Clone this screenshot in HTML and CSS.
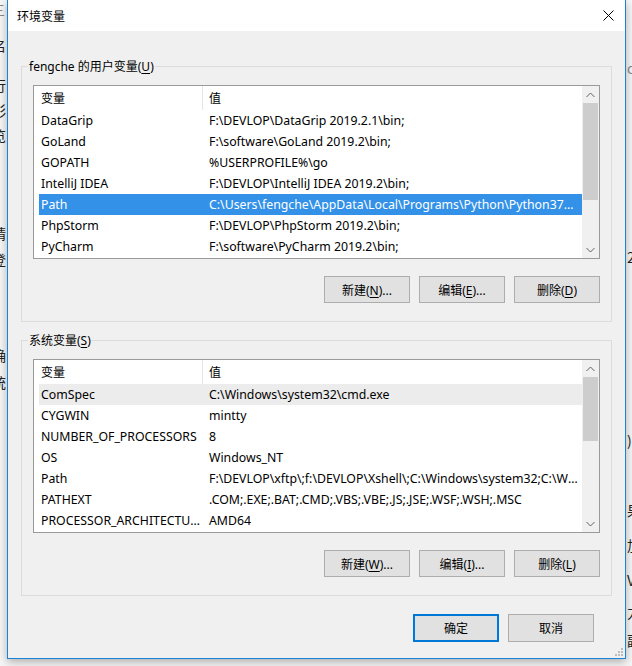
FILE: index.html
```html
<!DOCTYPE html>
<html lang="zh-CN">
 <head>
  <meta charset="utf-8">
  <title>环境变量</title>
  <link rel="stylesheet" href="styles.css">
 </head>
 <body>
  <div id="desktop">
   <!-- bits of the window behind the dialog -->
   <span class="frag grey l1">三</span>
   <span class="frag l2">名</span>
   <span class="frag l3">行</span>
   <span class="frag l4">彩</span>
   <span class="frag l5">览</span>
   <span class="frag l6">晴</span>
   <span class="frag l7">登</span>
   <span class="frag l8">确</span>
   <span class="frag l9">统</span>
   <span class="frag grey r1">d</span>
   <span class="frag r2">29</span>
   <span class="frag r3">)</span>
   <span class="frag r4">果</span>
   <span class="frag r5">加</span>
   <span class="frag r6">V</span>
   <span class="frag r7">力</span>
   <span class="frag r8">副</span>

   <div class="dialog">
    <div class="titlebar">
     <span class="title">环境变量</span>
     <svg class="close" width="11" height="11" viewBox="0 0 11 11">
      <path d="M0.5 0.5L10.5 10.5M10.5 0.5L0.5 10.5" stroke="#000" stroke-width="1" fill="none"/>
     </svg>
    </div>

    <div class="dialog-body">
     <fieldset class="group">
      <legend>fengche 的用户变量(<u>U</u>)</legend>
      <div class="list">
       <div class="list-rows">
        <div class="list-head">
         <div class="head-name">变量</div>
         <div class="head-value">值</div>
        </div>
        <div class="row"><div class="cell-name">DataGrip</div><div class="cell-value">F:\DEVLOP\DataGrip 2019.2.1\bin;</div></div>
        <div class="row"><div class="cell-name">GoLand</div><div class="cell-value">F:\software\GoLand 2019.2\bin;</div></div>
        <div class="row"><div class="cell-name">GOPATH</div><div class="cell-value">%USERPROFILE%\go</div></div>
        <div class="row"><div class="cell-name">IntelliJ IDEA</div><div class="cell-value">F:\DEVLOP\IntelliJ IDEA 2019.2\bin;</div></div>
        <div class="row selected"><div class="cell-name">Path</div><div class="cell-value">C:\Users\fengche\AppData\Local\Programs\Python\Python37\Scripts\;C:\Users\fengche\AppData\Local\Programs\Python\Python37\</div></div>
        <div class="row"><div class="cell-name">PhpStorm</div><div class="cell-value">F:\DEVLOP\PhpStorm 2019.2\bin;</div></div>
        <div class="row"><div class="cell-name">PyCharm</div><div class="cell-value">F:\software\PyCharm 2019.2\bin;</div></div>
       </div>
       <div class="scrollbar">
        <div class="sb-btn">
         <svg width="9" height="6" viewBox="0 0 9 6"><path d="M0.5 5L4.5 1L8.5 5" stroke="#606060" fill="none"/></svg>
        </div>
        <div class="sb-thumb user-thumb"></div>
        <div class="sb-track"></div>
        <div class="sb-btn">
         <svg width="9" height="6" viewBox="0 0 9 6"><path d="M0.5 1L4.5 5L8.5 1" stroke="#606060" fill="none"/></svg>
        </div>
       </div>
      </div>
      <div class="actions">
       <button class="btn">新建(<u>N</u>)...</button>
       <button class="btn">编辑(<u>E</u>)...</button>
       <button class="btn">删除(<u>D</u>)</button>
      </div>
     </fieldset>

     <fieldset class="group system">
      <legend>系统变量(<u>S</u>)</legend>
      <div class="list">
       <div class="list-rows">
        <div class="list-head">
         <div class="head-name">变量</div>
         <div class="head-value">值</div>
        </div>
        <div class="row hot"><div class="cell-name">ComSpec</div><div class="cell-value">C:\Windows\system32\cmd.exe</div></div>
        <div class="row"><div class="cell-name">CYGWIN</div><div class="cell-value">mintty</div></div>
        <div class="row"><div class="cell-name">NUMBER_OF_PROCESSORS</div><div class="cell-value">8</div></div>
        <div class="row"><div class="cell-name">OS</div><div class="cell-value">Windows_NT</div></div>
        <div class="row"><div class="cell-name">Path</div><div class="cell-value">F:\DEVLOP\xftp\;f:\DEVLOP\Xshell\;C:\Windows\system32;C:\Windows;C:\Windows\System32\Wbem</div></div>
        <div class="row"><div class="cell-name">PATHEXT</div><div class="cell-value">.COM;.EXE;.BAT;.CMD;.VBS;.VBE;.JS;.JSE;.WSF;.WSH;.MSC</div></div>
        <div class="row"><div class="cell-name">PROCESSOR_ARCHITECTURE</div><div class="cell-value">AMD64</div></div>
       </div>
       <div class="scrollbar">
        <div class="sb-btn">
         <svg width="9" height="6" viewBox="0 0 9 6"><path d="M0.5 5L4.5 1L8.5 5" stroke="#606060" fill="none"/></svg>
        </div>
        <div class="sb-thumb system-thumb"></div>
        <div class="sb-track"></div>
        <div class="sb-btn">
         <svg width="9" height="6" viewBox="0 0 9 6"><path d="M0.5 1L4.5 5L8.5 1" stroke="#606060" fill="none"/></svg>
        </div>
       </div>
      </div>
      <div class="actions">
       <button class="btn">新建(<u>W</u>)...</button>
       <button class="btn">编辑(<u>I</u>)...</button>
       <button class="btn">删除(<u>L</u>)</button>
      </div>
     </fieldset>

     <div class="footer">
      <button class="btn big default">确定</button>
      <button class="btn big">取消</button>
     </div>
    </div>

    <svg class="grip" width="8" height="8" viewBox="0 0 8 8">
     <rect x="6" y="0" width="2" height="2" fill="#bcbcbc"/>
     <rect x="3" y="3" width="2" height="2" fill="#bcbcbc"/>
     <rect x="6" y="3" width="2" height="2" fill="#bcbcbc"/>
     <rect x="0" y="6" width="2" height="2" fill="#bcbcbc"/>
     <rect x="3" y="6" width="2" height="2" fill="#bcbcbc"/>
     <rect x="6" y="6" width="2" height="2" fill="#bcbcbc"/>
    </svg>
   </div>
  </div>
 </body>
</html>
```

FILE: styles.css
```css
* {
    box-sizing: border-box;
}

body {
    margin: 0;
    font-family: "Noto Sans", "Noto Sans CJK SC", sans-serif;
    font-size: 12px;
    color: #000;
}

#desktop {
    position: relative;
    width: 632px;
    height: 666px;
    overflow: hidden;
    background: #f7f7f7;
}

/* window behind */
.frag {
    position: absolute;
    font-family: "Noto Sans CJK SC", sans-serif;
    font-size: 14px;
    line-height: 16px;
    color: #222;
}

.grey { color: #888; }

.l1 { left: -9px; top: 1px; }
.l2 { left: -8px; top: 37px; }
.l3 { left: -8px; top: 77px; }
.l4 { left: -8px; top: 102px; }
.l5 { left: -8px; top: 127px; }
.l6 { left: -8px; top: 225px; }
.l7 { left: -8px; top: 251px; }
.l8 { left: -8px; top: 347px; }
.l9 { left: -8px; top: 374px; }
.r1 { left: 627px; top: 60px; }
.r2 { left: 627px; top: 249px; }
.r3 { left: 627px; top: 432px; }
.r4 { left: 627px; top: 502px; }
.r5 { left: 627px; top: 537px; }
.r6 { left: 627px; top: 572px; }
.r7 { left: 627px; top: 604px; }
.r8 { left: 627px; top: 632px; }

/* dialog */
.dialog {
    position: absolute;
    left: 7px;
    top: 0;
    width: 619px;
    height: 659px;
    border: 1px solid #1883d7;
    border-top: none;
    background: #f0f0f0;
    box-shadow: 0 3px 9px rgba(0, 0, 0, 0.3);
    display: flex;
    flex-direction: column;
}

.titlebar {
    height: 31px;
    flex: 0 0 31px;
    background: #fff;
    display: flex;
    align-items: center;
    justify-content: space-between;
    padding: 0 11px 0 9px;
}

.title {
    font-family: "Noto Sans CJK SC", sans-serif;
    font-size: 12px;
    line-height: 16px;
}

.close {
    display: block;
}

.dialog-body {
    flex: 1;
    padding: 27px 13px 0;
    display: flex;
    flex-direction: column;
}

.group {
    margin: 0;
    min-width: 0;
    border: 1px solid #dcdcdc;
    padding: 10px 11px 18px;
}

.group.system {
    margin-top: 10px;
}

legend {
    padding: 0 1px;
    margin-left: -5px;
    line-height: 17px;
}

u {
    text-decoration-thickness: 1px;
    text-underline-offset: 2px;
}

/* list view */
.list {
    height: 174px;
    border: 1px solid #9a9a9a;
    background: #fff;
    display: flex;
}

.list-rows {
    flex: 1;
    min-width: 0;
}

.list-head {
    display: flex;
    height: 24px;
}

.head-name {
    width: 169px;
    padding-left: 7px;
    border-right: 1px solid #e5e5e5;
    display: flex;
    align-items: center;
}

.head-value {
    padding-left: 6px;
    display: flex;
    align-items: center;
}

.row {
    display: flex;
    align-items: center;
    height: 21px;
    margin-left: 5px;
    font-size: 12.3px;
}

.row.selected {
    background: #3391e8;
    color: #fff;
}

.row.hot {
    background: #ececec;
}

.cell-name,
.cell-value {
    white-space: nowrap;
    overflow: hidden;
    text-overflow: ellipsis;
    line-height: 17px;
}

.cell-name {
    width: 164px;
    flex: 0 0 164px;
    padding: 0 2px;
}

.cell-value {
    flex: 1;
    min-width: 0;
    padding: 0 4px 0 6px;
}

/* scroll bar */
.scrollbar {
    width: 17px;
    flex: 0 0 17px;
    background: #f0f0f0;
    display: flex;
    flex-direction: column;
}

.sb-btn {
    height: 17px;
    flex: 0 0 17px;
    display: flex;
    align-items: center;
    justify-content: center;
}

.sb-thumb {
    margin: 0 1px;
    background: #cdcdcd;
}

.user-thumb {
    height: 97px;
}

.system-thumb {
    height: 64px;
}

.sb-track {
    flex: 1;
}

/* buttons */
.actions {
    display: flex;
    justify-content: flex-end;
    gap: 9px;
    margin-top: 17px;
}

.btn {
    width: 86px;
    height: 27px;
    padding: 0;
    background: #e1e1e1;
    border: 1px solid #adadad;
    font-family: "Noto Sans", "Noto Sans CJK SC", sans-serif;
    font-size: 12px;
    color: #000;
}

.footer {
    display: flex;
    justify-content: flex-end;
    gap: 9px;
    margin: 18px 18px 0 0;
}

.btn.big {
    height: 28px;
}

.btn.default {
    border: 2px solid #0078d7;
}

.grip {
    position: absolute;
    right: 2px;
    bottom: 2px;
}
```
